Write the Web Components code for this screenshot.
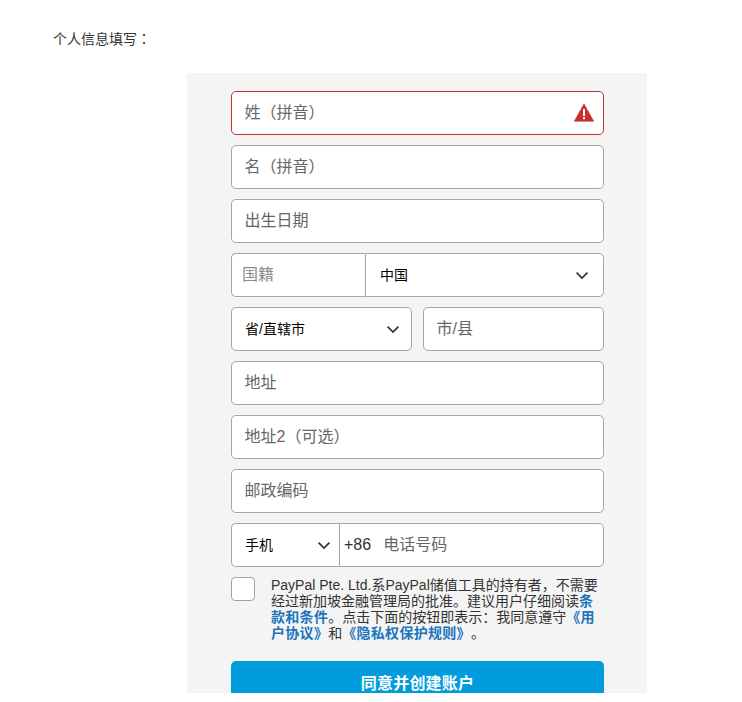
<!DOCTYPE html>
<html lang="zh-CN">
<head>
<meta charset="utf-8">
<title>个人信息填写</title>
<style>
  body {
    margin: 0;
    background: #fff;
    font-family: "Liberation Sans", "Noto Sans CJK SC", sans-serif;
    text-spacing-trim: space-all;
  }
</style>
</head>
<body>
<signup-page>
  <span slot="title">个人信息填写</span>
  <text-field error>姓（拼音）</text-field>
  <text-field>名（拼音）</text-field>
  <text-field>出生日期</text-field>
  <field-row joined>
    <text-field class="country">国籍</text-field>
    <select-field class="country-list">中国</select-field>
  </field-row>
  <field-row>
    <select-field>省/直辖市</select-field>
    <text-field>市/县</text-field>
  </field-row>
  <text-field>地址</text-field>
  <text-field>地址2（可选）</text-field>
  <text-field>邮政编码</text-field>
  <field-row joined>
    <select-field class="phone-type">手机</select-field>
    <text-field class="phone"><span slot="prefix">+86</span>电话号码</text-field>
  </field-row>
  <terms-check></terms-check>
  <submit-button>同意并创建账户</submit-button>
</signup-page>

<script>
  // attaches an open shadow root with the markup of the element
  class BaseElement extends HTMLElement {
    constructor() {
      super();
      this.attachShadow({ mode: 'open' });
      this.shadowRoot.innerHTML = this.constructor.markup;
    }
  }

  class SignupPage extends BaseElement {
    static markup = `
      <style>
        :host {
          display: block;
          height: 702px;
          overflow: hidden;
        }

        .title {
          box-sizing: border-box;
          height: 73px;
          padding: 28px 0 0 53px;
          font-size: 14px;
          line-height: 20px;
          color: #333;
        }

        .colon {
          font-family: "Noto Sans CJK TC", sans-serif;
        }

        .panel {
          box-sizing: border-box;
          display: flex;
          flex-direction: column;
          gap: 10px;
          width: 460px;
          height: 620px;
          margin-left: 187px;
          padding: 18px 43px 0 44px;
          overflow: hidden;
          background: #f4f4f4;
        }
      </style>
      <div class="title"><slot name="title"></slot><span class="colon" lang="zh-TW">：</span></div>
      <div class="panel"><slot></slot></div>`;
  }

  class FieldRow extends BaseElement {
    static markup = `
      <style>
        :host {
          display: flex;
          flex: none;
          gap: 11px;
        }

        :host([joined]) {
          gap: 0;
        }

        ::slotted(*) {
          flex: 1 1 181px !important;
          min-width: 0;
        }

        :host([joined]) ::slotted(:first-child) {
          --radius: 5px 0 0 5px;
          --border-right: 0;
        }

        :host([joined]) ::slotted(:last-child) {
          --radius: 0 5px 5px 0;
        }

        ::slotted(.country) {
          flex: 0 0 134px !important;
          --indent: 10px;
          --color: #8c8c8c;
        }

        ::slotted(.country-list) {
          --arrow-space: 14px;
          --indent: 14px;
        }

        ::slotted(.phone-type) {
          flex: 0 0 108px !important;
          --arrow-space: 8px;
        }

        ::slotted(.phone) {
          --indent: 4px;
        }
      </style>
      <slot></slot>`;
  }

  class TextField extends BaseElement {
    static markup = `
      <style>
        :host {
          box-sizing: border-box;
          display: flex;
          flex: none;
          align-items: center;
          height: 44px;
          padding: 0 9px 0 var(--indent, 12.5px);
          border: 1px solid #a5a5a5;
          border-right-width: var(--border-right, 1px);
          border-radius: var(--radius, 5px);
          background: #fff;
          color: var(--color, #666);
          font-size: 16px;
          line-height: 24px;
          white-space: nowrap;
        }

        :host([error]) {
          border-color: #c72e2e;
        }

        .text {
          flex: 1;
        }

        ::slotted([slot=prefix]) {
          margin-right: 12px;
          color: #333;
        }

        svg {
          display: none;
        }

        :host([error]) svg {
          display: block;
        }
      </style>
      <div class="text"><slot name="prefix"></slot><slot></slot></div>
      <svg width="20" height="20" viewBox="0 0 20 20">
        <path d="M10 1 19.7 18.2H.3Z" fill="#c72e2e" stroke="#c72e2e" stroke-width=".6" stroke-linejoin="round"/>
        <path d="M9 6h2v7H9ZM9 14.3h2v2H9Z" fill="#fff"/>
      </svg>`;
  }

  class SelectField extends BaseElement {
    static markup = `
      <style>
        :host {
          box-sizing: border-box;
          display: flex;
          flex: none;
          align-items: center;
          justify-content: space-between;
          height: 44px;
          padding: 0 var(--arrow-space, 11px) 0 var(--indent, 13px);
          border: 1px solid #a5a5a5;
          border-right-width: var(--border-right, 1px);
          border-radius: var(--radius, 5px);
          background: #fff;
          color: #000;
          font-size: 14px;
          line-height: 20px;
          white-space: nowrap;
        }
      </style>
      <span><slot></slot></span>
      <svg width="14" height="10" viewBox="0 0 14 10">
        <path d="M1.6 2.6 7 8l5.4-5.4" fill="none" stroke="#333" stroke-width="1.7"/>
      </svg>`;
  }

  class TermsCheck extends BaseElement {
    static markup = `
      <style>
        :host {
          display: flex;
          flex: none;
          gap: 16px;
          height: 74px;
        }

        .box {
          box-sizing: border-box;
          width: 24px;
          height: 24px;
          border: 1px solid #9da3a6;
          border-radius: 4px;
          background: #fff;
        }

        .terms {
          font-size: 14px;
          line-height: 16px;
          color: #333;
          white-space: nowrap;
        }

        .terms div {
          height: 16px;
        }

        b {
          color: #1b75bb;
          letter-spacing: .3px;
        }
      </style>
      <div class="box"></div>
      <div class="terms">
        <div>PayPal Pte. Ltd.系PayPal储值工具的持有者，不需要</div>
        <div>经过新加坡金融管理局的批准。建议用户仔细阅读<b>条</b></div>
        <div><b>款和条件</b>。点击下面的按钮即表示：我同意遵守<b>《用</b></div>
        <div><b>户协议》</b>和<b>《隐私权保护规则》</b>。</div>
      </div>`;
  }

  class SubmitButton extends BaseElement {
    static markup = `
      <style>
        :host {
          box-sizing: border-box;
          display: flex;
          flex: none;
          align-items: center;
          justify-content: center;
          height: 44px;
          padding-bottom: 2px;
          border-radius: 5px;
          background: #009cde;
          color: #fff;
          font-size: 16px;
          font-weight: bold;
          letter-spacing: .2px;
        }
      </style>
      <slot></slot>`;
  }

  customElements.define('signup-page', SignupPage);
  customElements.define('field-row', FieldRow);
  customElements.define('text-field', TextField);
  customElements.define('select-field', SelectField);
  customElements.define('terms-check', TermsCheck);
  customElements.define('submit-button', SubmitButton);
</script>
</body>
</html>
